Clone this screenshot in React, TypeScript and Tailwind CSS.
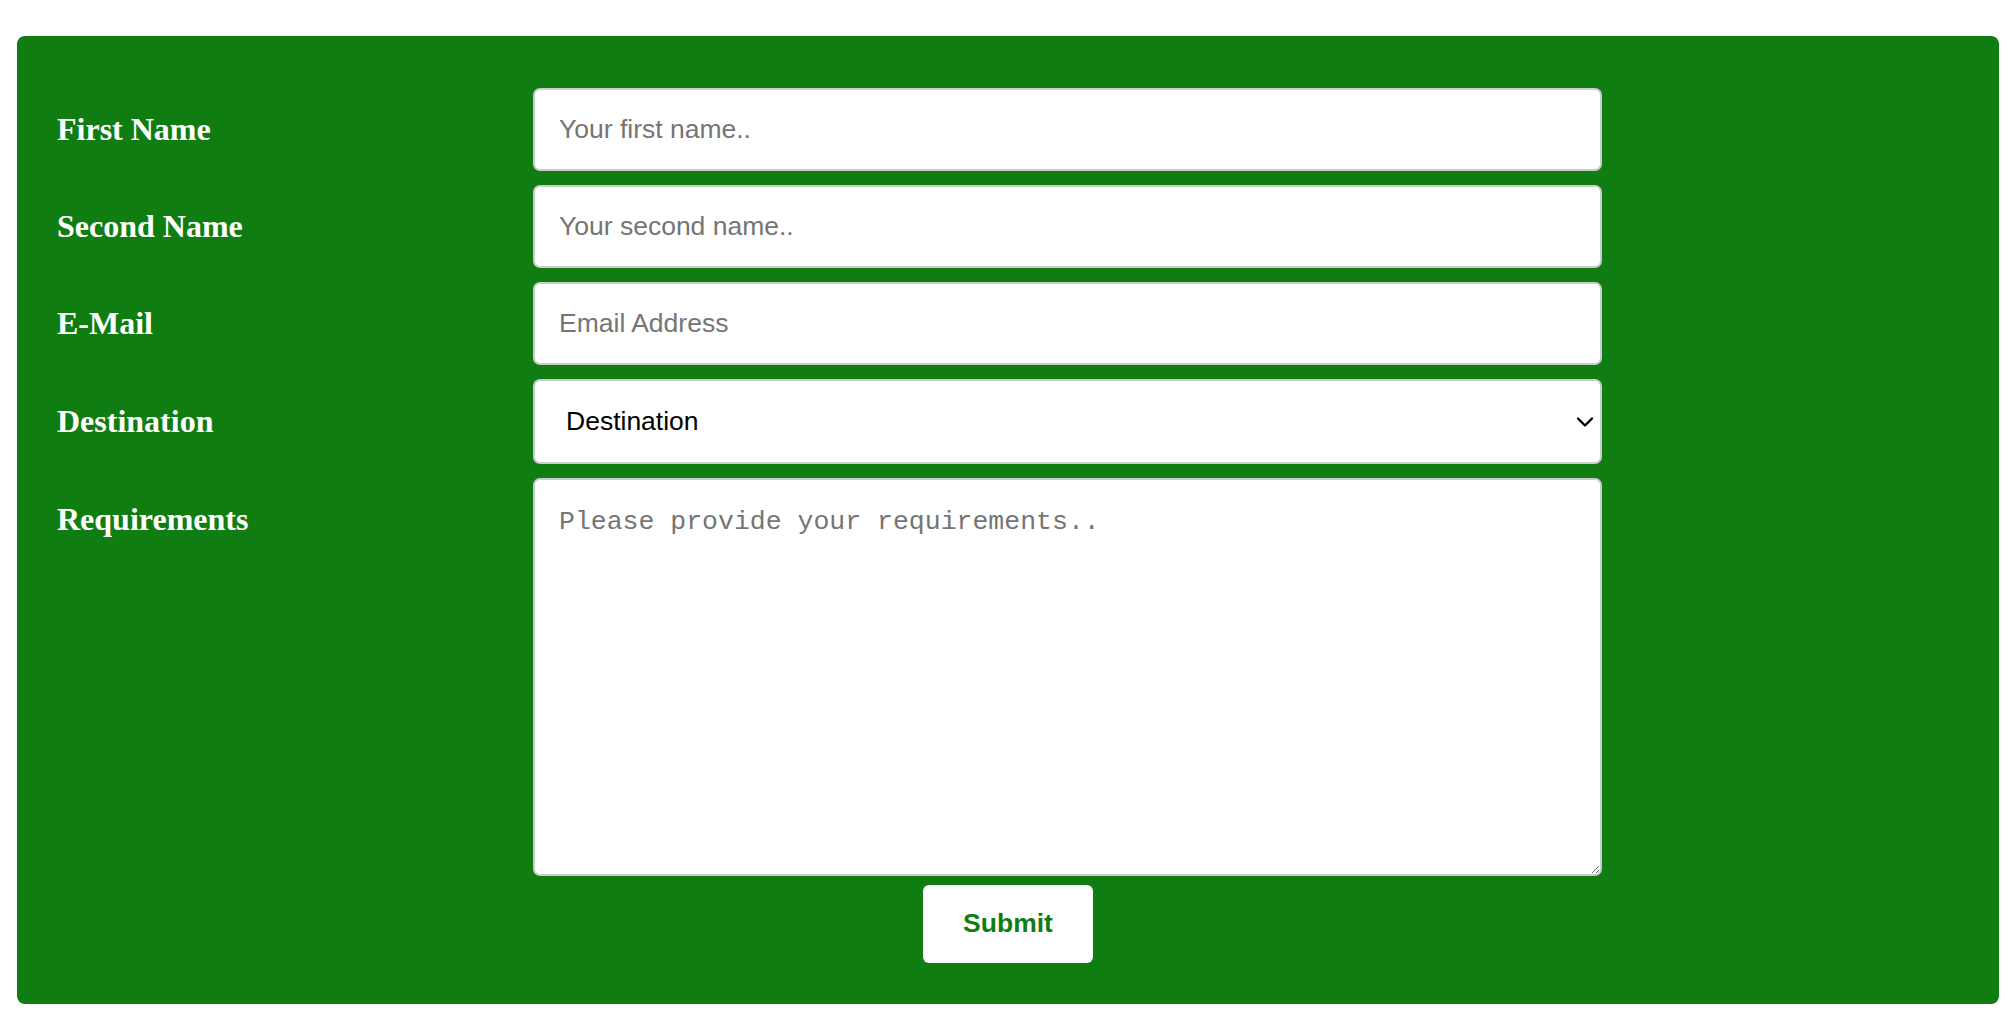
import { ChevronDown } from "lucide-react";

export default function App() {
  return (
    <main className="min-h-screen bg-white pt-[36px] pl-[17px] pr-[11px] pb-[20px]">
      {/* Enquiry form */}
      <form
        onSubmit={(e) => e.preventDefault()}
        className="bg-[#107d12] rounded-[8px] pt-[52px] pb-[41px] px-[40px]"
      >
        <div className="flex flex-col gap-[14px]">
          <div className="flex">
            <label className="w-[476px] pt-[25px] leading-[32px] text-[32px] font-bold text-white font-['Liberation_Serif',serif]">
              First Name
            </label>
            <input
              type="text"
              placeholder="Your first name.."
              className="w-[1069px] h-[83px] bg-white border-2 border-[#cccccc] rounded-[7px] px-[24px] text-[26.5px] font-['Liberation_Sans',Arial,sans-serif] text-black placeholder:text-[#757575] outline-none"
            />
          </div>

          <div className="flex">
            <label className="w-[476px] pt-[25px] leading-[32px] text-[32px] font-bold text-white font-['Liberation_Serif',serif]">
              Second Name
            </label>
            <input
              type="text"
              placeholder="Your second name.."
              className="w-[1069px] h-[83px] bg-white border-2 border-[#cccccc] rounded-[7px] px-[24px] text-[26.5px] font-['Liberation_Sans',Arial,sans-serif] text-black placeholder:text-[#757575] outline-none"
            />
          </div>

          <div className="flex">
            <label className="w-[476px] pt-[25px] leading-[32px] text-[32px] font-bold text-white font-['Liberation_Serif',serif]">
              E-Mail
            </label>
            <input
              type="email"
              placeholder="Email Address"
              className="w-[1069px] h-[83px] bg-white border-2 border-[#cccccc] rounded-[7px] px-[24px] text-[26.5px] font-['Liberation_Sans',Arial,sans-serif] text-black placeholder:text-[#757575] outline-none"
            />
          </div>

          <div className="flex">
            <label className="w-[476px] pt-[26px] leading-[32px] text-[32px] font-bold text-white font-['Liberation_Serif',serif]">
              Destination
            </label>
            <div className="relative w-[1069px] h-[85px]">
              <select
                defaultValue="Destination"
                className="w-full h-full appearance-none bg-white border-2 border-[#cccccc] rounded-[7px] pl-[31px] pr-[50px] text-[26.5px] font-['Liberation_Sans',Arial,sans-serif] text-black outline-none"
              >
                <option>Destination</option>
                <option>Europe</option>
                <option>Asia</option>
                <option>Africa</option>
                <option>Americas</option>
              </select>
              <ChevronDown
                strokeWidth={2}
                className="pointer-events-none absolute right-[3px] top-[29px] w-[28px] h-[28px] text-black"
              />
            </div>
          </div>

          <div className="flex">
            <label className="w-[476px] pt-[25px] leading-[32px] text-[32px] font-bold text-white font-['Liberation_Serif',serif]">
              Requirements
            </label>
            <textarea
              placeholder="Please provide your requirements.."
              className="w-[1069px] h-[398px] bg-white border-2 border-[#cccccc] rounded-[7px] px-[24px] pt-[23px] text-[26.5px] font-['Liberation_Mono',monospace] text-black placeholder:text-[#757575] outline-none"
            />
          </div>
        </div>

        <div className="flex justify-center mt-[9px]">
          <button
            type="submit"
            className="w-[170px] h-[78px] bg-white rounded-[6px] text-[26.5px] font-bold text-[#107d12] font-['Liberation_Sans',Arial,sans-serif]"
          >
            Submit
          </button>
        </div>
      </form>
    </main>
  );
}
